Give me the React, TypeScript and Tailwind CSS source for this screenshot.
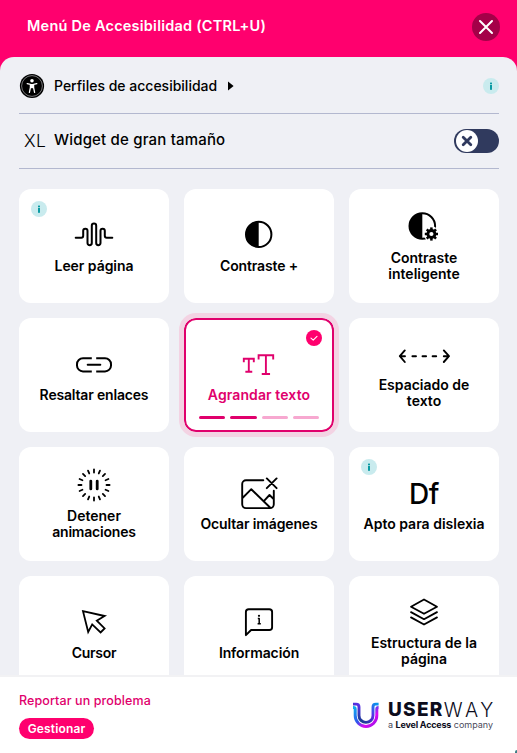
import type { ReactNode } from 'react';

function Glyph({ children, className = '' }: { children: ReactNode; className?: string }) {
  return (
    <svg
      className={`h-10 w-16 shrink-0 ${className}`}
      viewBox="-32 -20 64 40"
      fill="none"
      stroke="currentColor"
      strokeWidth="2"
      strokeLinecap="round"
      strokeLinejoin="round"
      aria-hidden="true"
    >
      {children}
    </svg>
  );
}

const WaveIcon = () => (
  <Glyph>
    <path d="M-18.3 3.8H-12.7Q-10.8 3.8-10.8 1.8V-3.2A2.15 2.15 0 0 1-6.5-3.2V9A2.15 2.15 0 0 0-2.2 9V-8.2A2.2 2.2 0 0 1 2.2-8.2V9A2.15 2.15 0 0 0 6.5 9V-3.2A2.15 2.15 0 0 1 10.8-3.2V1.8Q10.8 3.8 12.7 3.8H18.3" />
  </Glyph>
);

const ContrastIcon = () => (
  <Glyph>
    <circle cx="-0.3" cy="0.4" r="12.7" />
    <path d="M-.3-12.3A12.7 12.7 0 0 0-.3 13.1Z" fill="currentColor" stroke="none" />
  </Glyph>
);

const teeth = [0, 45, 90, 135, 180, 225, 270, 315];

const SmartContrastIcon = () => (
  <Glyph>
    <circle cx="-1.7" cy="0" r="12.8" />
    <path d="M-1.7-12.8A12.8 12.8 0 0 0-1.7 12.8Z" fill="currentColor" stroke="none" />
    <circle cx="7.4" cy="8" r="7.7" fill="white" stroke="none" />
    <circle cx="7.4" cy="8" r="3.5" strokeWidth="2.8" />
    {teeth.map((a) => (
      <path key={a} d="M7.4 4V1.4" strokeWidth="2.5" strokeLinecap="butt" transform={`rotate(${a} 7.4 8)`} />
    ))}
  </Glyph>
);

const LinkIcon = () => (
  <Glyph>
    <path
      d="M-2.2-4.8H-11A6 6 0 0 0-17 1.2V2.4A6 6 0 0 0-11 8.4H-2.2M2.2-4.8H11A6 6 0 0 1 17 1.2V2.4A6 6 0 0 1 11 8.4H2.2"
      strokeLinecap="butt"
    />
    <path d="M-6.3 1.7H6.3" />
  </Glyph>
);

const TextSizeIcon = () => (
  <Glyph>
    <path
      d="M-15.2-1.6V-4.2H-5.2V-1.6M-10.2-4.2V8.6M-12.7 8.7H-7.7M-.4-4.4V-7.8H14.2V-4.4M6.9-7.8V11M3.7 11H10.1"
      strokeLinecap="square"
      strokeLinejoin="miter"
      strokeWidth="1.9"
    />
  </Glyph>
);

const SpacingIcon = () => (
  <Glyph className="relative top-0.5">
    <path d="M-19.2-4.6L-24.2 1.2L-19.2 7M-24 1.2H-19M19.8-4.6L25 1.2L19.8 7M24.8 1.2H19.8M-11.6 1.2H-8M-1.5 1.2H2.1M8.6 1.2H12.2" strokeWidth="1.9" />
  </Glyph>
);

const rays = [0, 22.5, 45, 67.5, 90, 112.5, 135, 157.5, 180, 202.5, 225, 247.5, 270, 292.5, 315, 337.5];

const PauseIcon = () => (
  <Glyph>
    <g transform="translate(0 1)">
      {rays.map((a) => (
        <path key={a} d="M0-12.5V-15.6" strokeWidth="1.8" transform={`rotate(${a})`} />
      ))}
      <path d="M-3.2-3.9V3.9M3.2-3.9V3.9" strokeWidth="2.8" />
    </g>
  </Glyph>
);

const ImageIcon = () => (
  <Glyph>
    <path
      d="M4.3-11.8H-13A3.8 3.8 0 0 0-16.8-8V12.3A3.8 3.8 0 0 0-13 16.1H11A3.8 3.8 0 0 0 14.8 12.3V-1.3M-16.5 6L-7.7-2.8L11.3 15.8M5.3 8.6L10.5 3L14.6 7M7.8-13.6L17.6-3.8M17.6-13.6L7.8-3.8"
      strokeWidth="1.9"
    />
  </Glyph>
);

const CursorIcon = () => (
  <Glyph>
    <path d="M-11-9.9L10.6-5L2.8-.4L10.6 7.4L6.6 11.4L-1.8 3.4L-5.8 10.9Z" strokeWidth="1.8" strokeLinejoin="miter" />
  </Glyph>
);

const InfoBubbleIcon = () => (
  <Glyph>
    <path d="M-10.3-11.7H10.3A2.8 2.8 0 0 1 13.1-8.9V6.2A2.8 2.8 0 0 1 10.3 9H-7.9L-13.1 14.2V-8.9A2.8 2.8 0 0 1-10.3-11.7Z" strokeWidth="1.9" />
    <path d="M-1.2-2.4H.2V2.6M-1.4 2.7H1.8" strokeWidth="1.5" strokeLinecap="butt" />
    <circle cx="0" cy="-5.2" r="1.1" fill="currentColor" stroke="none" />
  </Glyph>
);

const LayersIcon = () => (
  <Glyph>
    <path d="M0-11.5L13-4.3L0 2.8L-13-4.3ZM-13 1.1L0 8.2L13 1.1M-13 6.4L0 13.5L13 6.4" strokeWidth="1.8" />
  </Glyph>
);

const DyslexiaIcon = () => (
  <span className="pt-1 text-[28px] leading-8 font-medium tracking-[-0.5px]">Df</span>
);

function InfoBadge() {
  return (
    <span className="flex size-4 shrink-0 items-center justify-center rounded-full bg-[#c9ebee] text-[#0a9ba3]">
      <svg className="size-4" viewBox="0 0 16 16" fill="currentColor" aria-hidden="true">
        <rect x="7" y="4.6" width="2" height="1.7" />
        <rect x="7" y="7" width="2" height="4.8" />
      </svg>
    </span>
  );
}

interface Tile {
  icon: ReactNode;
  lines: [string, string][];
  info?: boolean;
  active?: boolean;
  shift?: string;
}

const tiles: Tile[] = [
  { icon: <WaveIcon />, lines: [['Leer página', 'tracking-[-0.05px]']], info: true },
  { icon: <ContrastIcon />, lines: [['Contraste +', 'tracking-[-0.15px]']] },
  { icon: <SmartContrastIcon />, lines: [['Contraste', ''], ['inteligente', '']] },
  { icon: <LinkIcon />, lines: [['Resaltar enlaces', 'tracking-[-0.18px]']] },
  { icon: <TextSizeIcon />, lines: [['Agrandar texto', 'tracking-[0.1px]']], active: true },
  { icon: <SpacingIcon />, lines: [['Espaciado de', ''], ['texto', '']], shift: 'pb-1' },
  { icon: <PauseIcon />, lines: [['Detener', ''], ['animaciones', 'tracking-[-0.2px]']] },
  { icon: <ImageIcon />, lines: [['Ocultar imágenes', 'tracking-[-0.14px]']] },
  { icon: <DyslexiaIcon />, lines: [['Apto para dislexia', '']], info: true },
  { icon: <CursorIcon />, lines: [['Cursor', 'tracking-[-0.25px]']] },
  { icon: <InfoBubbleIcon />, lines: [['Información', 'tracking-[-0.1px]']] },
  { icon: <LayersIcon />, lines: [['Estructura de la', ''], ['página', '']], shift: 'pb-1' },
];

function FeatureTile({ icon, lines, info, active, shift = '' }: Tile) {
  return (
    <button
      className={`relative flex h-[114px] flex-col items-center justify-center rounded-xl bg-white ${shift} ${
        active ? 'text-[#e0006c] ring-2 ring-[#e0006c] ring-inset outline-[5px] outline-[#f3d3e3]' : 'text-black'
      }`}
    >
      {info && (
        <span className="absolute top-3 left-3">
          <InfoBadge />
        </span>
      )}
      {active && (
        <svg className="absolute top-3 right-3 size-4" viewBox="0 0 16 16" fill="none" aria-hidden="true">
          <circle cx="8" cy="8" r="8" fill="#ff006e" />
          <path d="M5 8.2L7.2 10.1L11 6.4" stroke="white" strokeWidth="1.1" strokeLinecap="round" strokeLinejoin="round" />
        </svg>
      )}
      <span className="flex h-8 items-center justify-center">{icon}</span>
      <span className="mt-2 flex flex-col items-center text-sm leading-4 font-semibold">
        {lines.map(([text, tracking]) => (
          <span key={text} className={tracking}>
            {text}
          </span>
        ))}
      </span>
      {active && (
        <span className="absolute inset-x-[15px] bottom-[13px] grid grid-cols-4 gap-[5px]">
          <span className="h-[3px] rounded-full bg-[#e0006c]" />
          <span className="h-[3px] rounded-full bg-[#e0006c]" />
          <span className="h-[3px] rounded-full bg-[#f7a8d0]" />
          <span className="h-[3px] rounded-full bg-[#f7a8d0]" />
        </span>
      )}
    </button>
  );
}

function PersonIcon() {
  return (
    <svg className="size-[26px]" viewBox="-13 -13 26 26" aria-hidden="true">
      <circle r="12.1" fill="black" />
      <circle r="10.4" fill="none" stroke="#a9a9ae" strokeWidth="0.7" />
      <circle cy="-5.2" r="1.8" fill="white" />
      <path d="M-4.8-2.4L-1.6-1.6V1.6L-2.6 6.4M4.8-2.4L1.6-1.6V1.6L2.6 6.4M-1.6-1.4H1.6" fill="none" stroke="white" strokeWidth="1.3" strokeLinecap="round" strokeLinejoin="round" />
      <path d="M-1.6-2H1.6V2.2H-1.6Z" fill="white" />
    </svg>
  );
}

function UserWayMark() {
  return (
    <svg className="h-[26px] w-[26px]" viewBox="0 0 26 26" fill="none" aria-hidden="true">
      <defs>
        <linearGradient id="outer" x1="2" y1="3" x2="22" y2="24" gradientUnits="userSpaceOnUse">
          <stop offset="0" stopColor="#08b5ee" />
          <stop offset="0.48" stopColor="#3155ed" />
          <stop offset="0.75" stopColor="#dc08f2" />
          <stop offset="1" stopColor="#9b12e8" />
        </linearGradient>
        <linearGradient id="inner" x1="24" y1="2" x2="10" y2="21" gradientUnits="userSpaceOnUse">
          <stop offset="0" stopColor="#0795ed" />
          <stop offset="0.5" stopColor="#5a2fe6" />
          <stop offset="1" stopColor="#183d91" />
        </linearGradient>
      </defs>
      <path d="M0 5.4H.4Q2.2 5.4 2.2 7.2V13.6A10.8 10.8 0 0 0 23.8 13.6V7.2Q23.8 5.4 25.6 5.4" stroke="url(#outer)" strokeWidth="3" />
      <path d="M0 2.1H3.2Q6 2.1 6 4.9V13.4A7 7 0 0 0 20 13.4V4.9Q20 2.1 22.8 2.1H25.6" stroke="url(#inner)" strokeWidth="2.9" />
    </svg>
  );
}

export default function App() {
  return (
    <div className="flex h-[753px] w-full flex-col overflow-hidden bg-[#ff006e] font-['Inter','Liberation_Sans',sans-serif] text-black">
      <header className="flex h-[57px] shrink-0 items-center justify-between pr-[17px] pb-[3px] pl-[27px] text-white">
        <h1 className="pb-0.5 text-[14.5px] leading-5 font-semibold tracking-[0.23px]">Menú De Accesibilidad (CTRL+U)</h1>
        <button className="flex size-7 items-center justify-center rounded-full bg-[#a40048]" aria-label="Cerrar">
          <svg className="size-4" viewBox="0 0 16 16" stroke="white" strokeWidth="2" strokeLinecap="round" aria-hidden="true">
            <path d="M2 2L14 14M14 2L2 14" />
          </svg>
        </button>
      </header>

      <main className="flex min-h-0 flex-1 flex-col rounded-t-[14px] bg-[#eff0f5]">
        <div className="mr-[18px] ml-[19px] flex h-[57px] shrink-0 items-center border-b border-[#b3b8cf] pt-0.5">
          <PersonIcon />
          <span className="ml-[9px] text-sm font-medium">Perfiles de accesibilidad</span>
          <svg className="ml-[11px] h-2.5 w-1.5" viewBox="0 0 6 10" aria-hidden="true">
            <path d="M0 0.5L5.6 5L0 9.5Z" fill="black" />
          </svg>
          <span className="ml-auto">
            <InfoBadge />
          </span>
        </div>
        <div className="mr-[18px] ml-[19px] flex h-[55px] shrink-0 items-center border-b border-[#b3b8cf]">
          <span className="w-[35px] pt-px pl-[5px] text-[17.5px] font-light tracking-[0.4px]">XL</span>
          <span className="pb-0.5 text-[15px] font-medium tracking-[0.18px]">Widget de gran tamaño</span>
          <button className="ml-auto flex h-6 w-[45px] items-center rounded-full bg-[#303a5e] pl-0.5" aria-label="Widget de gran tamaño">
            <span className="flex size-[22px] items-center justify-center rounded-full bg-white">
              <svg className="size-3" viewBox="0 0 12 12" stroke="#303a5e" strokeWidth="2.8" strokeLinecap="round" aria-hidden="true">
                <path d="M2.2 2.2L9.8 9.8M9.8 2.2L2.2 9.8" />
              </svg>
            </span>
          </button>
        </div>
        <div className="mt-5 ml-[19px] grid min-h-0 flex-1 auto-rows-[114px] grid-cols-[150px_150px_150px] gap-[15px] [clip-path:inset(-20px_-20px_0)]">
          {tiles.map((tile) => (
            <FeatureTile key={tile.lines[0][0]} {...tile} />
          ))}
        </div>
      </main>

      <footer className="relative flex h-[78px] shrink-0 justify-between border-t-2 border-[#f2f2f4] bg-white pr-[20px] pl-[19px]">
        <div className="flex flex-col items-start pt-4">
          <a className="text-[12.5px] leading-4 font-medium tracking-[0.1px] text-[#e0006c]">Reportar un problema</a>
          <button className="mt-[9px] flex h-[21px] w-[75px] items-center justify-center rounded-full bg-[#ff006e] text-xs font-semibold tracking-[0.15px] text-white">
            Gestionar
          </button>
        </div>
        <div className="flex items-start pt-[25px]">
          <UserWayMark />
          <div className="ml-[9px] w-[109px] whitespace-nowrap">
            <div className="flex items-center text-[19px] leading-[16px] text-[#0c0c1c]">
              <span className="font-extrabold tracking-[1.3px]">USER</span>
              <span className="text-[19.5px] font-light tracking-[3.6px]">WAY</span>
            </div>
            <div className="mt-[2px] text-[9px] leading-[10px] text-[#4b4b5c]">
              a <b className="font-bold tracking-[-0.2px] text-[#0c0c1c]">Level Access</b> company
            </div>
          </div>
        </div>
        <span className="absolute right-0 bottom-0 h-[3px] w-0.5 rounded-tl-full bg-[#3d7f86]" />
      </footer>
    </div>
  );
}
